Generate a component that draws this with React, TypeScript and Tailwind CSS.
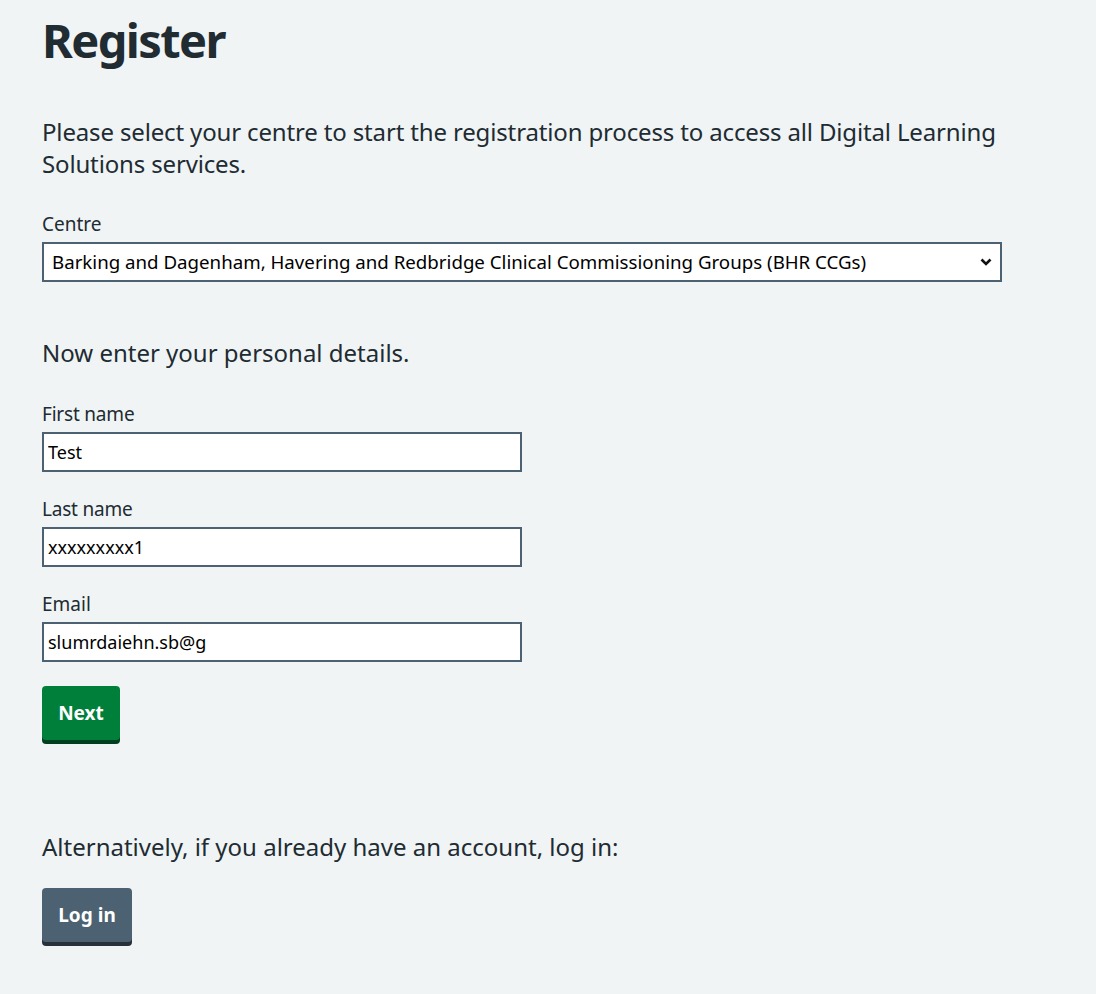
import React from 'react';

const font = { fontFamily: '"Noto Sans", Arial, sans-serif' };

function Field({ label, value }: { label: string; value: string }) {
  return (
    <div className="mb-[23px]">
      <label className="block text-[19px] leading-[28px] mb-[4px] tracking-[-0.2px]">{label}</label>
      <input
        type="text"
        defaultValue={value}
        className="block w-[480px] h-[40px] border-2 border-[#4c6272] bg-white px-[4px] text-[18px] text-black outline-none"
      />
    </div>
  );
}

export default function App() {
  return (
    <div className="min-h-[994px] bg-[#f0f4f5] text-[#212b32]" style={font}>
      <div className="pl-[42px] pt-[12px]">
        <h1 className="text-[47px] leading-[56px] font-bold mb-[48px] tracking-[-1.6px]">Register</h1>

        <p className="text-[24px] leading-[32px] max-w-[980px] mb-[30px] tracking-[-0.15px]">
          Please select your centre to start the registration process to access all Digital Learning
          Solutions services.
        </p>

        <label className="block text-[19px] leading-[28px] mb-[4px]">Centre</label>
        <div className="relative w-[960px]">
          <select className="block w-full h-[40px] appearance-none border-2 border-[#4c6272] bg-white pl-[8px] text-[18.7px] text-black outline-none">
            <option>Barking and Dagenham, Havering and Redbridge Clinical Commissioning Groups (BHR CCGs)</option>
          </select>
          <svg
            className="absolute right-[10px] top-[16px] pointer-events-none"
            width="12"
            height="8"
            viewBox="0 0 12 8"
          >
            <path d="M1.5 1.5 L6 6 L10.5 1.5" fill="none" stroke="#111" strokeWidth="2.6" />
          </svg>
        </div>

        <p className="text-[24px] leading-[32px] mt-[55px] mb-[31px]">Now enter your personal details.</p>

        <Field label="First name" value="Test" />
        <Field label="Last name" value="xxxxxxxxx1" />
        <div className="mb-[24px]">
          <label className="block text-[19px] leading-[28px] mb-[4px]">Email</label>
          <input
            type="text"
            defaultValue="slumrdaiehn.sb@g"
            className="block w-[480px] h-[40px] border-2 border-[#4c6272] bg-white px-[4px] text-[18px] text-black outline-none"
          />
        </div>

        <button className="block w-[78px] h-[54px] rounded-[4px] bg-[#007f3b] text-white text-[19px] font-bold shadow-[0_4px_0_#00401e]">
          Next
        </button>

        <p className="text-[24px] leading-[32px] mt-[91px] mb-[25px]">
          Alternatively, if you already have an account, log in:
        </p>

        <button className="block w-[90px] h-[54px] rounded-[4px] bg-[#4c6272] text-white text-[19px] font-bold shadow-[0_4px_0_#263139]">
          Log in
        </button>
      </div>
    </div>
  );
}
